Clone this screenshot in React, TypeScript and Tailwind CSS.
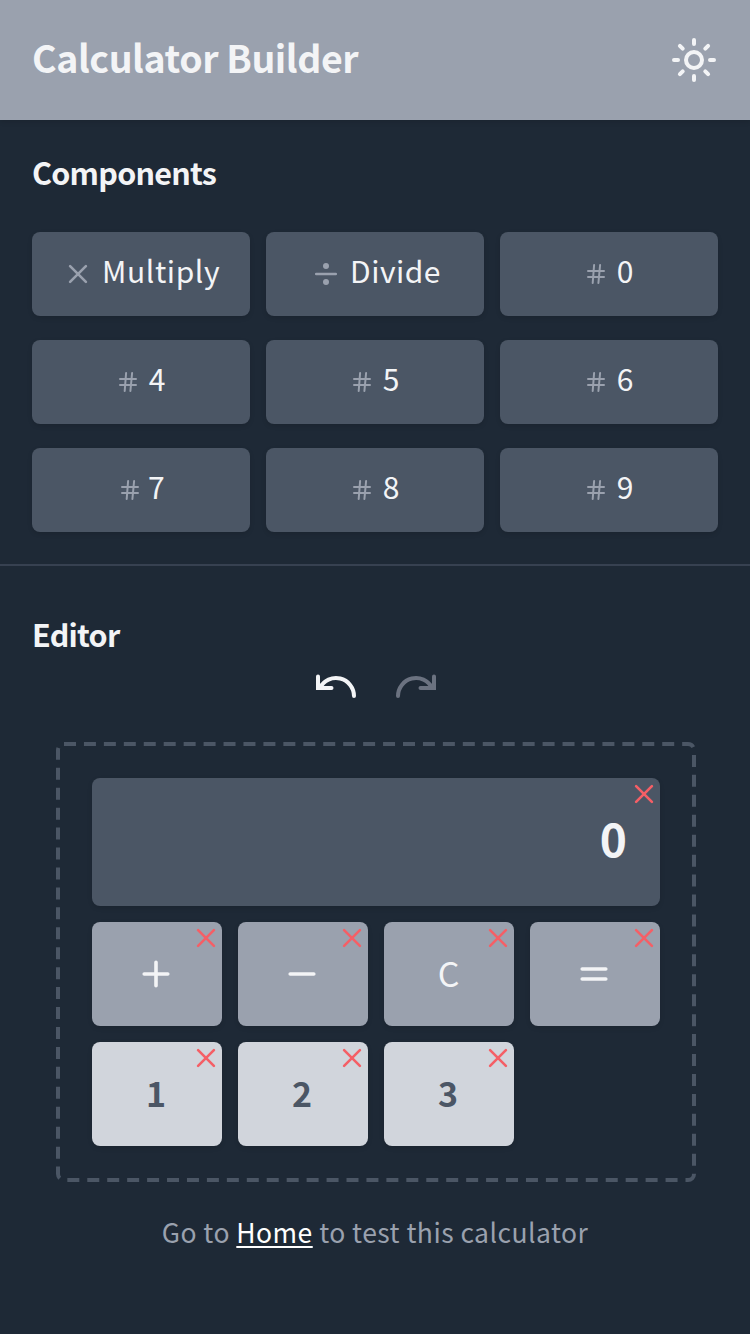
import type { ReactNode } from "react";

function Cross({ className }: { className: string }) {
  return (
    <svg viewBox="0 0 24 24" fill="none" stroke="currentColor" strokeWidth="2.6" strokeLinecap="round" className={className}>
      <path d="M4.1 4.1 19.9 19.9M19.9 4.1 4.1 19.9" />
    </svg>
  );
}

function DivideIcon() {
  return (
    <svg viewBox="0 0 24 24" fill="currentColor" className="size-6 shrink-0">
      <circle cx="12" cy="4" r="3" />
      <circle cx="12" cy="20" r="3" />
      <path d="M2.2 12H21.8" stroke="currentColor" strokeWidth="2.5" strokeLinecap="round" />
    </svg>
  );
}

function HashIcon() {
  return (
    <svg viewBox="0 0 24 24" fill="none" stroke="currentColor" strokeWidth="2" strokeLinecap="round" className="size-6 shrink-0">
      <path d="M4 9H20M4 15H20M10.1 3 8.7 21M16.1 3 14.4 21" />
    </svg>
  );
}

function SunIcon() {
  return (
    <svg viewBox="0 0 48 48" fill="none" stroke="currentColor" strokeWidth="4" strokeLinecap="round" className="size-12">
      <circle cx="24" cy="24" r="8" />
      <path d="M24 4V8M24 40V44M4 24H8M40 24H44M9.9 9.9 12.7 12.7M35.3 35.3 38.1 38.1M9.9 38.1 12.7 35.3M35.3 12.7 38.1 9.9" />
    </svg>
  );
}

function UndoIcon({ className }: { className: string }) {
  return (
    <svg viewBox="0 0 48 48" fill="none" stroke="currentColor" strokeWidth="4" strokeLinecap="round" className={className}>
      <path d="M6 14.4V26H19.5" />
      <path d="M8 25.8A18 18 0 0 1 42 34" />
    </svg>
  );
}

function KeySymbol({ d }: { d: string }) {
  return (
    <svg viewBox="0 0 32 32" fill="none" stroke="currentColor" strokeWidth="3.6" strokeLinecap="round" className="mr-0.5 size-8">
      <path d={d} />
    </svg>
  );
}

type Component = { label: string; icon: ReactNode; text: string };

const digit = "ml-2 w-[18px] text-center";

const components: Component[] = [
  { label: "Multiply", icon: <Cross className="ml-1 size-6 shrink-0" />, text: "ml-3 w-[118px] tracking-[0.6px]" },
  { label: "Divide", icon: <DivideIcon />, text: "ml-3 w-[86px] tracking-[0.5px]" },
  { label: "0", icon: <HashIcon />, text: digit },
  { label: "4", icon: <HashIcon />, text: digit },
  { label: "5", icon: <HashIcon />, text: digit },
  { label: "6", icon: <HashIcon />, text: digit },
  { label: "7", icon: <HashIcon />, text: "ml-1.5 w-4 text-center" },
  { label: "8", icon: <HashIcon />, text: digit },
  { label: "9", icon: <HashIcon />, text: digit },
];

const operators: ReactNode[] = [
  <KeySymbol d="M4.2 16H27.8M16 4.2V27.8" />,
  <KeySymbol d="M4.2 16H27.8" />,
  <span className="mr-0.5 pb-[3px] text-[34px] leading-none font-normal tracking-[-1px]">C</span>,
  <KeySymbol d="M4.2 11H27.8M4.2 21H27.8" />,
];

function Key({ className, children }: { className: string; children: ReactNode }) {
  return (
    <div className={`relative flex items-center justify-center rounded-lg shadow-[0_2px_5px_rgba(0,0,0,0.12)] ${className}`}>
      {children}
      <button className="absolute top-1 right-1 text-[#f45f66]" aria-label="Remove">
        <Cross className="size-6" />
      </button>
    </div>
  );
}

export default function App() {
  return (
    <div className="flex h-[1334px] w-[750px] flex-col bg-[#1e2936] font-['Noto_Sans_CJK_SC','Noto_Sans',sans-serif] text-[#f3f4f6]">
      <header className="flex h-[120px] shrink-0 items-center justify-between bg-[#9aa1ae] px-8 shadow-[0_2px_5px_rgba(0,0,0,0.12)]">
        <h1 className="pb-1.5 text-[37.5px] leading-[60px] font-bold tracking-[-0.42px]">Calculator Builder</h1>
        <SunIcon />
      </header>

      <section className="h-[446px] shrink-0 border-b-2 border-[#374151] px-8 pt-[31px]">
        <h2 className="text-[30.5px] leading-[42px] font-bold tracking-[-0.75px]">Components</h2>
        <div className="mt-[39px] grid grid-cols-3 gap-x-4 gap-y-6">
          {components.map((c) => (
            <div
              key={c.label}
              className="flex h-[84px] items-center justify-center rounded-lg bg-[#4b5665] text-[#9aa1ae] shadow-[0_2px_5px_rgba(0,0,0,0.12)]"
            >
              {c.icon}
              <span className={`pb-[9px] text-[30px] leading-[44px] whitespace-nowrap text-[#f3f4f6] ${c.text}`}>{c.label}</span>
            </div>
          ))}
        </div>
      </section>

      <section className="flex flex-col px-8 pt-[47px]">
        <h2 className="text-[30.5px] leading-[42px] font-bold tracking-[-0.75px]">Editor</h2>
        <div className="mt-[7px] flex h-12 justify-center gap-8 pl-0.5">
          <UndoIcon className="size-12" />
          <UndoIcon className="size-12 -scale-x-100 text-[#6b7280]" />
        </div>

        <div className="relative mt-8 ml-6 h-[440px] w-[640px] p-9">
          <svg viewBox="0 0 640 440" fill="none" className="absolute inset-0 size-full text-[#4b5665]">
            <rect x="2" y="2" width="636" height="436" rx="6" stroke="currentColor" strokeWidth="4" strokeDasharray="12 7.941" />
          </svg>
          <div className="grid grid-cols-4 gap-4">
            <Key className="col-span-4 h-32 bg-[#4b5665]">
              <span className="w-full pr-[33px] pb-2.5 text-right text-[46px] leading-[64px] font-bold">0</span>
            </Key>
            {operators.map((symbol, i) => (
              <Key key={i} className="h-[104px] bg-[#9aa1ae]">
                {symbol}
              </Key>
            ))}
            {["1", "2", "3"].map((n) => (
              <Key key={n} className="h-[104px] bg-[#d1d5dc]">
                <span className="pr-0.5 pb-[3px] text-[34px] leading-[48px] font-bold text-[#4b5665]">{n}</span>
              </Key>
            ))}
          </div>
        </div>

        <p className="mt-[30px] text-center text-[26.5px] leading-[40px] tracking-[0.46px] text-[#9aa1ae]">
          Go to <a className="text-white underline decoration-2 underline-offset-[3px]">Home</a> to test this calculator
        </p>
      </section>
    </div>
  );
}
